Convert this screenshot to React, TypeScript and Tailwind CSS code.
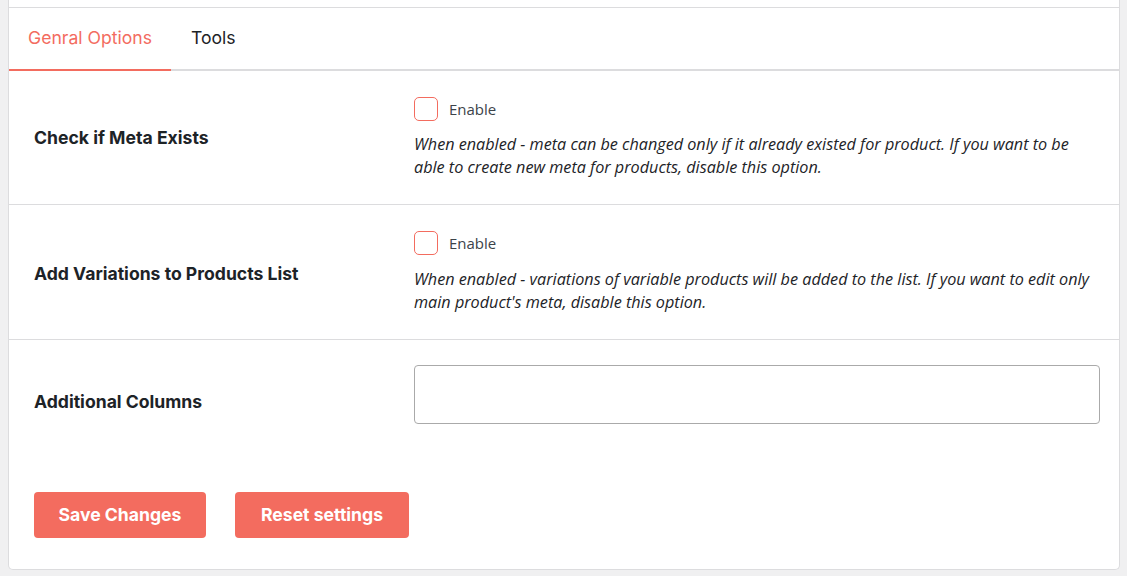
import React from "react";

const inter = "font-['Inter',sans-serif]";
const segoe = "font-['Open_Sans',sans-serif]";

function CheckRow({ label, desc, extra }: { label: string; desc: string; extra?: boolean }) {
  return (
    <div className="flex items-center border-b border-[#dcdcde] pt-[26px] pb-[25px]">
      <div className={`w-[405px] shrink-0 pl-[25px] text-[17.6px] font-bold text-[#1d2327] ${inter} ${extra ? "pt-[3px]" : "pt-[1px]"}`}>{label}</div>
      <div className="flex-1 pr-[20px]">
        <label className="flex items-center gap-[11px]">
          <span className="h-[24px] w-[24px] rounded-[5px] border border-[#f36c5f] bg-white" />
          <span className={`text-[15px] text-[#3c434a] ${segoe}`}>Enable</span>
        </label>
        <p className={`${extra ? "mt-[13px]" : "mt-[12px]"} text-[16.2px] italic leading-[23px] text-[#1d2327] ${segoe}`}>{desc}</p>
      </div>
    </div>
  );
}

export default function App() {
  return (
    <div className="h-[576px] overflow-hidden bg-[#f0f0f1] pl-[8px] pr-[7px] pb-[6px]">
      <div className="flex h-full flex-col rounded-b-[5px] border-x border-b border-[#dcdcde] bg-white">
        <div className="h-[7px]" />
        <div className="border-t border-[#dcdcde]" />
        <div className={`flex h-[63px] border-b-2 border-[#dcdcde] text-[17.6px] ${inter}`}>
          <div className="-mb-[2px] flex items-center border-b-2 border-[#f36c5f] px-[19px] text-[#f36c5f]">Genral Options</div>
          <div className="flex items-center px-[20px] text-[#1d2327]">Tools</div>
        </div>
        <CheckRow
          label="Check if Meta Exists"
          desc="When enabled - meta can be changed only if it already existed for product. If you want to be able to create new meta for products, disable this option."
        />
        <CheckRow
          extra
          label="Add Variations to Products List"
          desc="When enabled - variations of variable products will be added to the list. If you want to edit only main product's meta, disable this option."
        />
        <div className="flex items-center pt-[25px]">
          <div className={`w-[405px] shrink-0 pl-[25px] pt-[15px] text-[17.6px] font-bold text-[#1d2327] ${inter}`}>Additional Columns</div>
          <div className="flex-1 pr-[19px]">
            <input className="block h-[59px] w-full rounded-[4px] border border-[#aaaaaa] bg-white" />
          </div>
        </div>
        <div className={`flex gap-[29px] pl-[25px] pt-[68px] ${inter}`}>
          <button className="h-[46px] w-[172px] rounded-[4px] bg-[#f36c5f] text-[17.6px] font-bold text-white">Save Changes</button>
          <button className="h-[46px] w-[174px] rounded-[4px] bg-[#f36c5f] text-[17.6px] font-bold text-white">Reset settings</button>
        </div>
      </div>
    </div>
  );
}
